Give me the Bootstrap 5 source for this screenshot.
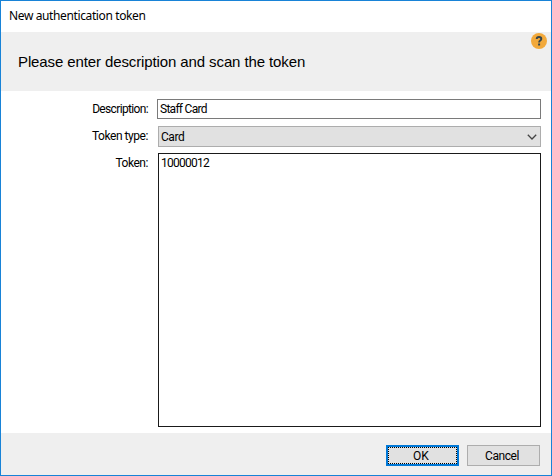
<!DOCTYPE html>
<html lang="en">
<head>
<meta charset="utf-8">
<title>New authentication token</title>
<link href="https://cdn.jsdelivr.net/npm/bootstrap@5.3.0/dist/css/bootstrap.min.css" rel="stylesheet">
<style>
body{font:12px/14px Roboto,"Liberation Sans",sans-serif;color:#000;letter-spacing:-.45px}
.dialog{height:100vh;border:1px solid #1883d7}
.titlebar{height:31px;padding:7px 8px;font:12px/16px "Noto Sans","Open Sans",sans-serif;letter-spacing:-.38px}
.banner{height:59px;background:#efefef;padding:0 4px 0 17px}
.banner h1{font:15px/20px "Liberation Sans",sans-serif;letter-spacing:-.11px;padding-top:20px}
.help{width:16px;height:16px;margin-top:1px}
.fields{padding:8px 10px 6px 0}
.fields label{width:147px;padding:3px 0 0 0;text-align:right;flex:none}
.fields .tight{letter-spacing:-.65px}
.fields .form-control{border-radius:0;font:inherit;letter-spacing:inherit;color:#000;min-height:0;box-shadow:none}
.fields .desc{height:20px;margin-left:9px;border-color:#7a7a7a;padding:0 2px;letter-spacing:-.72px}
.fields .kind{height:21px;border-color:#adadad;background:#e1e1e1;padding:0 3px 0 2px}
.fields .token{border-color:#1a1a1a;padding:2px;resize:none;letter-spacing:-.75px}
.shift{margin-left:10px}
.gap-a{margin-bottom:7px}.gap-b{margin-bottom:6px}
.kind svg{width:10px;height:6px}
.actions{height:42px;background:#efefef;padding:12px 11px 0 0;gap:8px}
.actions .btn{width:73px;height:21px;border-radius:0;border:1px solid #adadad;background:#e1e1e1;color:#000;font:inherit;letter-spacing:inherit;padding:1px 3px 0 0;line-height:19px}
.actions .ok{border:2px solid #0078d7;outline:1px dotted #000;outline-offset:-3px;line-height:17px;letter-spacing:0}
</style>
</head>
<body>
<div class="dialog d-flex flex-column bg-white overflow-hidden">
  <div class="titlebar">New authentication token</div>
  <header class="banner d-flex justify-content-between align-items-start">
    <h1 class="m-0">Please enter description and scan the token</h1>
    <svg class="help" viewBox="0 0 16 16"><circle cx="8" cy="8" r="8" fill="#f2a93b"/><path d="M5.7 6.1C5.7 4.6 6.6 4 8 4s2.3.7 2.3 1.9C10.300 7.600 8.100 7.500 8.100 9.400" fill="none" stroke="#34444c" stroke-width="1.9"/><path d="M7.100 10.500h2v2h-2z" fill="#34444c"/></svg>
  </header>
  <main class="fields d-flex flex-column flex-grow-1">
    <div class="d-flex gap-a"><label class="tight" for="desc">Description:</label><input id="desc" class="form-control desc" value="Staff Card"></div>
    <div class="d-flex gap-b"><label for="kind">Token type:</label><button id="kind" type="button" class="form-control kind shift d-flex align-items-center justify-content-between"><span>Card</span><svg viewBox="0 0 10 6"><path d="M.8.800 5 5 9.200.800" fill="none" stroke="#444" stroke-width="1.300"/></svg></button></div>
    <div class="d-flex flex-grow-1"><label for="token">Token:</label><textarea id="token" class="form-control token shift">10000012</textarea></div>
  </main>
  <footer class="actions d-flex justify-content-end">
    <button class="btn ok">OK</button>
    <button class="btn">Cancel</button>
  </footer>
</div>
<script src="https://cdn.jsdelivr.net/npm/bootstrap@5.3.0/dist/js/bootstrap.bundle.min.js"></script>
</body>
</html>
